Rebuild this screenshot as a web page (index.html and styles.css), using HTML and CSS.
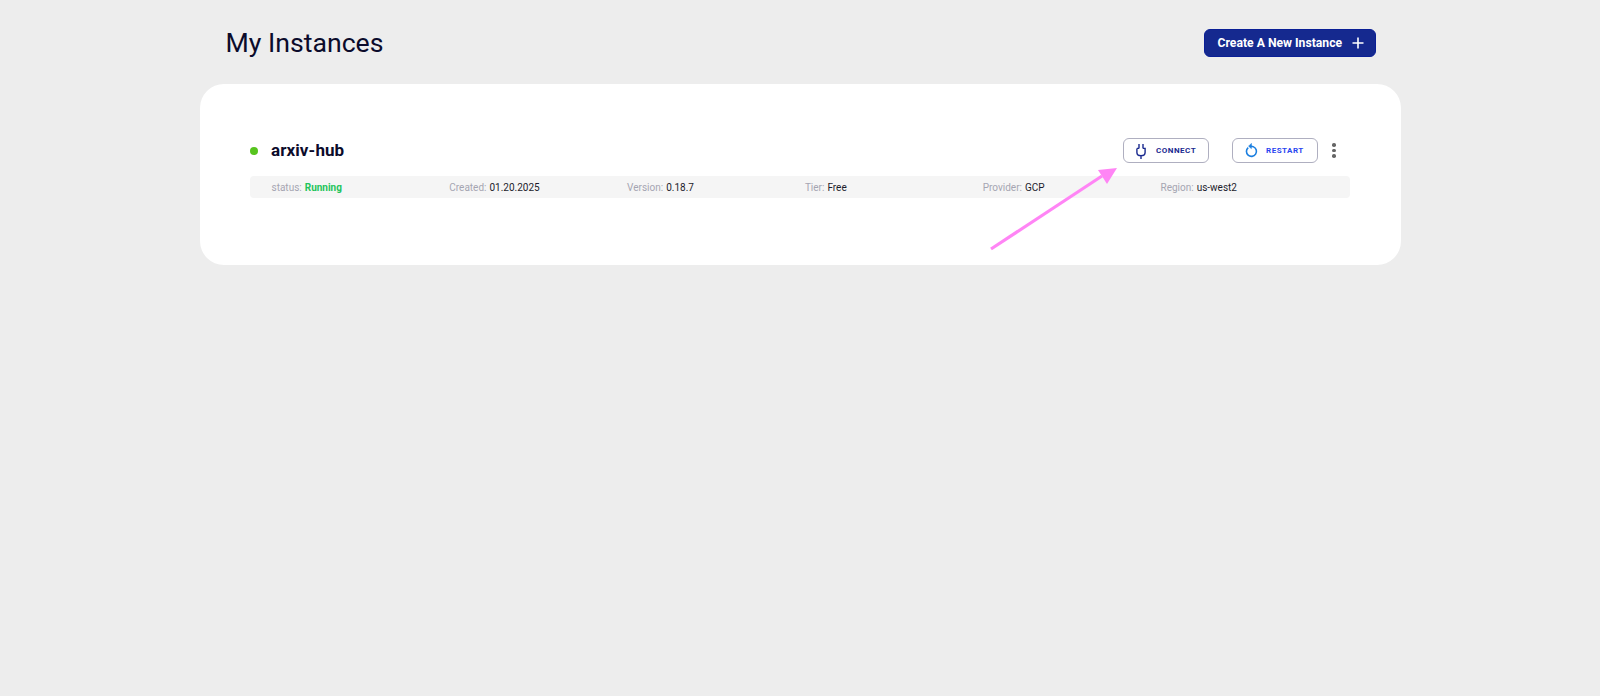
FILE: index.html
```html
<!DOCTYPE html>
<html lang="en">
<head>
<meta charset="utf-8">
<title>My Instances</title>
<link rel="stylesheet" href="styles.css">
</head>
<body>
<main class="page">
  <header class="top">
    <h1 class="title">My Instances</h1>
    <button class="create">Create A New Instance
      <svg class="plus" width="12" height="12" viewBox="0 0 12 12"><path d="M6 0.5V11.5M0.5 6H11.5" stroke="#fff" stroke-width="1.6" fill="none"/></svg>
    </button>
  </header>
  <section class="card">
    <div class="row">
      <span class="dot"></span>
      <h2 class="name">arxiv-hub</h2>
      <button class="act act-connect">
        <svg class="ico" width="10" height="15" viewBox="0 0 10 15" fill="none" stroke="#1a2a8f" stroke-width="1.4"><path d="M3 0V4.4M7 0V4.4M0.9 4.4V8.4C0.9 10.4 2.6 11.6 5 11.6C7.4 11.6 9.1 10.4 9.1 8.4V4.4H7M3 4.4H0.9"/><path d="M5 11.6V15"/></svg>
        <span>CONNECT</span>
      </button>
      <button class="act act-restart">
        <svg class="ico" width="13" height="15" viewBox="0 0 13 15" fill="none" stroke="#1b7fe0" stroke-width="1.6"><path d="M3.2 4.6A5 5 0 1 0 8.6 3.9C7.8 3.4 7 3.2 6 3.2"/><path d="M6.4 0.4L3.6 3.2L6.4 5.6Z" fill="#1b7fe0" stroke-width="0.6"/></svg>
        <span>RESTART</span>
      </button>
      <button class="more" aria-label="More"><i></i><i></i><i></i></button>
    </div>
    <div class="info">
      <div><span class="k">status:</span> <span class="run">Running</span></div>
      <div><span class="k">Created:</span> <span class="v">01.20.2025</span></div>
      <div><span class="k">Version:</span> <span class="v">0.18.7</span></div>
      <div><span class="k">Tier:</span> <span class="v">Free</span></div>
      <div><span class="k">Provider:</span> <span class="v">GCP</span></div>
      <div><span class="k">Region:</span> <span class="v">us-west2</span></div>
    </div>
  </section>
</main>
<svg class="arrow" width="140" height="95" viewBox="0 0 140 95"><path d="M2 88L113 15" stroke="#ff85f5" stroke-width="3.2" fill="none"/><path d="M128 7L109 9L118 23Z" fill="#ff85f5"/></svg>
</body>
</html>
```
FILE: styles.css
```css
* { box-sizing: border-box; }
html, body { margin: 0; height: 100%; }
body { background: #ededed; font-family: Roboto, "Liberation Sans", sans-serif; color: #0b0b2b; overflow: hidden; position: relative; }
.page { width: 1201px; margin-left: 200px; }
.top { height: 84px; display: flex; align-items: flex-start; justify-content: space-between; padding: 29px 25px 0 25.5px; }
.title { margin: 0; font-size: 26.67px; line-height: 28px; font-weight: 400; color: #0b0b2b; }
.create { width: 172px; height: 28px; display: flex; align-items: center; padding: 0 0 0 12.5px; background: #15298f; border: 1px solid #0a1f96; border-radius: 6px; color: #fff; font: 700 12.2px Roboto, sans-serif; white-space: nowrap; }
.plus { margin-left: 10px; }
.card { background: #fff; border-radius: 24px; height: 181px; padding: 54px 50px 0; }
.row { height: 25px; display: flex; align-items: center; }
.dot { width: 8px; height: 8px; border-radius: 50%; background: #57c41e; margin-right: 13px; }
.name { margin: -1px 0 0; font-size: 17px; letter-spacing: 0.1px; font-weight: 700; color: #0b0b2b; flex: 1; }
.act { height: 25px; width: 86px; display: flex; align-items: center; background: #fff; border: 1px solid #afafc0; border-radius: 6px; padding: 0 0 0 12px; font: 700 8px Roboto, sans-serif; letter-spacing: 0.5px; }
.act-connect { color: #1a2a8f; }
.act-connect span { margin-left: 10px; }
.act-connect .ico { margin-top: 1px; }
.act-restart { color: #2a45f0; margin-left: 23px; width: 85.5px; }
.act-restart span { margin-left: 8px; }
.more { width: 33.5px; height: 25px; background: none; border: 0; padding: 0; display: flex; flex-direction: column; align-items: center; justify-content: center; gap: 2px; }
.more i { width: 3.6px; height: 3.6px; border-radius: 50%; background: #666; }
.info { margin-top: 13px; height: 22px; width: 1100px; background: #f5f5f5; border-radius: 4px; padding-left: 21.5px; display: grid; grid-template-columns: repeat(6, 177.8px); align-items: center; font-size: 10px; }
.k { color: #a5a5b2; margin-right: 0.5px; }
.v { color: #1c1c2c; }
.run { color: #1fc45c; font-weight: 700; }
.arrow { position: absolute; left: 989px; top: 161px; }
```
